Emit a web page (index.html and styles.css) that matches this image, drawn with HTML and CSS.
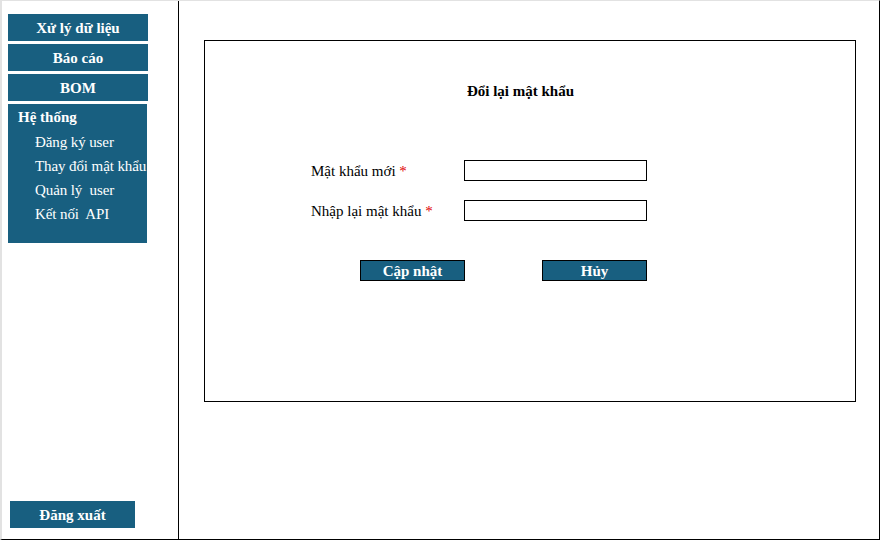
FILE: index.html
```html
<!DOCTYPE html>
<html lang="vi">
<head>
<meta charset="utf-8">
<title>Đổi lại mật khẩu</title>
<link rel="stylesheet" href="styles.css">
</head>
<body>
<div class="frame">
  <aside class="sidebar">
    <nav class="nav">
      <a class="nav-btn">Xử lý dữ liệu</a>
      <a class="nav-btn">Báo cáo</a>
      <a class="nav-btn">BOM</a>
      <div class="nav-group">
        <div class="nav-group-title">Hệ thống</div>
        <a class="nav-sub">Đăng ký user</a>
        <a class="nav-sub">Thay đổi mật khẩu</a>
        <a class="nav-sub">Quản lý&nbsp; user</a>
        <a class="nav-sub">Kết nối&nbsp; API</a>
      </div>
    </nav>
    <a class="logout">Đăng xuất</a>
  </aside>
  <main class="main">
    <section class="card">
      <h1 class="card-title">Đổi lại mật khẩu</h1>
      <form class="form">
        <div class="form-row">
          <label class="form-label">Mật khẩu mới <span class="req">*</span></label>
          <input class="form-input" type="password">
        </div>
        <div class="form-row">
          <label class="form-label">Nhập lại mật khẩu <span class="req">*</span></label>
          <input class="form-input" type="password">
        </div>
        <div class="form-actions">
          <button class="btn" type="button">Cập nhật</button>
          <button class="btn" type="button">Hủy</button>
        </div>
      </form>
    </section>
  </main>
</div>
</body>
</html>
```
FILE: styles.css
```css
html, body {
  margin: 0;
  padding: 0;
  background: #ffffff;
}
body {
  font-family: "Liberation Serif", "Times New Roman", serif;
  font-size: 15px;
  color: #000;
}
.frame {
  box-sizing: border-box;
  width: 880px;
  height: 540px;
  border-top: 1px solid #e2e2e2;
  border-left: 2px solid #e2e2e2;
  border-right: 1px solid #000;
  border-bottom: 1px solid #000;
  display: flex;
}
.sidebar {
  box-sizing: border-box;
  width: 177px;
  border-right: 1px solid #000;
  padding: 13px 0 11px 6px;
  display: flex;
  flex-direction: column;
}
.nav {
  display: flex;
  flex-direction: column;
  gap: 3px;
}
.nav-btn {
  box-sizing: border-box;
  display: block;
  width: 140px;
  height: 27px;
  padding-top: 1px;
  line-height: 26px;
  background: #185f80;
  color: #fff;
  font-weight: bold;
  text-align: center;
}
.nav-group {
  box-sizing: border-box;
  width: 139px;
  height: 139px;
  background: #185f80;
  color: #fff;
  padding: 1px 0 0 10px;
}
.nav-group-title {
  font-weight: bold;
  line-height: 24px;
  margin-bottom: 1px;
}
.nav-sub {
  display: block;
  line-height: 24px;
  padding-left: 17px;
  white-space: nowrap;
  letter-spacing: -0.1px;
}
.logout {
  box-sizing: border-box;
  margin-top: auto;
  margin-left: 2px;
  display: block;
  width: 125px;
  height: 27px;
  padding-top: 1px;
  line-height: 26px;
  background: #185f80;
  color: #fff;
  font-weight: bold;
  text-align: center;
}
.main {
  flex: 1;
  padding: 39px 0 0 25px;
}
.card {
  box-sizing: border-box;
  width: 652px;
  height: 362px;
  border: 1px solid #000;
  padding-top: 42px;
}
.card-title {
  margin: 0;
  font-size: 15px;
  font-weight: bold;
  line-height: 17px;
  text-align: center;
  padding-right: 19px;
}
.form {
  margin-top: 60px;
}
.form-row {
  display: flex;
  align-items: center;
  height: 21px;
  margin-bottom: 19px;
  padding-left: 106px;
}
.form-label {
  width: 153px;
  padding-top: 1px;
}
.req {
  color: #e00000;
}
.form-input {
  box-sizing: border-box;
  width: 183px;
  height: 21px;
  margin: 0;
  border: 1px solid #000;
  padding: 0 2px;
  background: #fff;
  font: inherit;
}
.form-actions {
  display: flex;
  gap: 77px;
  padding-left: 155px;
  margin-top: 39px;
}
.btn {
  box-sizing: border-box;
  width: 105px;
  height: 21px;
  margin: 0;
  padding: 1px 0 0;
  border: 1px solid #000;
  background: #185f80;
  color: #fff;
  font-family: inherit;
  font-size: 15px;
  font-weight: bold;
  line-height: 18px;
}
```
